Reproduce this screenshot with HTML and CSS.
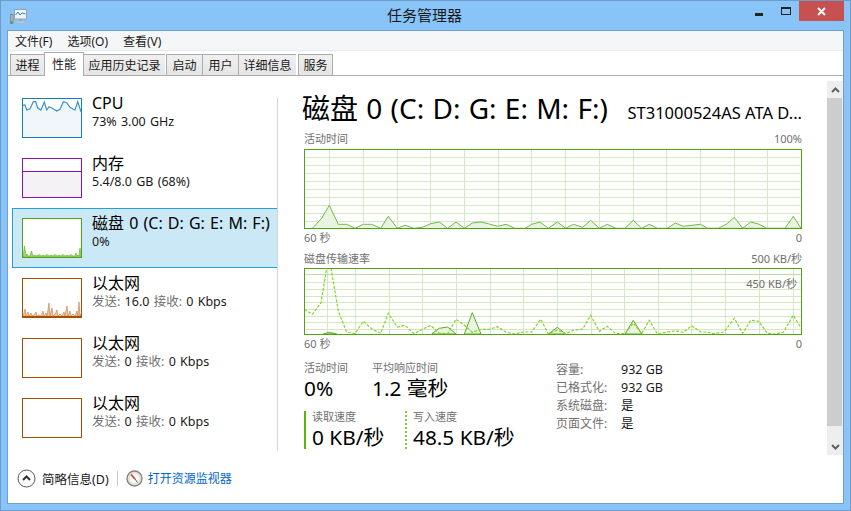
FILE: index.html
```html
<!DOCTYPE html>
<html lang="zh-CN">
<head>
<meta charset="utf-8">
<title>任务管理器</title>
<link rel="stylesheet" href="styles.css">
</head>
<body>
<div class="window">
  <header class="titlebar">
    <svg class="app-icon" width="18" height="16" viewBox="0 0 18 16">
      <rect x="0.5" y="5.5" width="2.5" height="9" fill="#b4bab4" stroke="#6f7d6f" stroke-width="0.7"/>
      <rect x="1" y="12" width="1.5" height="2" fill="#3fa82c"/>
      <rect x="4.5" y="0.5" width="12" height="9.5" fill="#eef3f7" stroke="#97a3ad"/>
      <polyline points="5.5,6 8,3 10,6 12,4 15.5,5" fill="none" stroke="#2f86cc"/>
      <rect x="9" y="10" width="3" height="2" fill="#9fa8af"/>
      <rect x="7" y="12" width="7" height="2" fill="#bcc3c9"/>
    </svg>
    <div class="title">任务管理器</div>
    <div class="controls">
      <span class="ctl-min"></span>
      <span class="ctl-max"></span>
      <span class="ctl-close">
        <svg width="9" height="9" viewBox="0 0 9 9"><path d="M1 1 8 8M8 1 1 8" stroke="#fff" stroke-width="2" fill="none"/></svg>
      </span>
    </div>
  </header>

  <div class="client">
    <nav class="menu">
      <span class="menu-item">文件(F)</span>
      <span class="menu-item">选项(O)</span>
      <span class="menu-item">查看(V)</span>
    </nav>
    <div class="tabs">
      <span class="tab">进程</span>
      <span class="tab tab-on">性能</span>
      <span class="tab">应用历史记录</span>
      <span class="tab tab-wide tab-gap">启动</span>
      <span class="tab tab-wide">用户</span>
      <span class="tab">详细信息</span>
      <span class="tab tab-gap">服务</span>
    </div>

    <main class="main">
      <div class="list">
        <div class="item">
          <svg class="thumb" width="60" height="40" viewBox="0 0 60 40">
            <rect x="0.5" y="0.5" width="59" height="39" fill="#f1f6fa"/>
            <polygon points="0.3,7.3 3,7 4.7,12 8,10.7 11.3,3.7 13.7,3.7 15.7,10 19,12 22.3,4 24.7,12 27,8.7 30.3,10.3 34.7,13 38,11.3 41.3,3.7 44.7,4.7 48,9.3 51.3,11.3 53,12 55.7,3.7 59,13.7 59,0.5 0.3,0.5" fill="#fff"/>
            <polyline points="0.3,7.3 3,7 4.7,12 8,10.7 11.3,3.7 13.7,3.7 15.7,10 19,12 22.3,4 24.7,12 27,8.7 30.3,10.3 34.7,13 38,11.3 41.3,3.7 44.7,4.7 48,9.3 51.3,11.3 53,12 55.7,3.7 59,13.7" fill="none" stroke="#3d93cc" stroke-width="1.2"/>
            <rect x="0.5" y="0.5" width="59" height="39" fill="none" stroke="#117dbb"/>
          </svg>
          <div class="info"><div class="name">CPU</div><div class="sub">73% 3.00 GHz</div></div>
        </div>
        <div class="item">
          <svg class="thumb" width="60" height="40" viewBox="0 0 60 40">
            <rect x="0.5" y="13.5" width="59" height="26" fill="#f4f2f4"/>
            <path d="M0 13.5H60" stroke="#8b12ae"/>
            <rect x="0.5" y="0.5" width="59" height="39" fill="none" stroke="#8b12ae"/>
          </svg>
          <div class="info"><div class="name">内存</div><div class="sub">5.4/8.0 GB (68%)</div></div>
        </div>
        <div class="item item-on">
          <svg class="thumb" width="60" height="40" viewBox="0 0 60 40">
            <rect x="0.5" y="0.5" width="59" height="39" fill="#fff"/>
            <polygon points="1,39 2.5,28 4,38 5,36 6,38 8,38 9.5,33 11,38 13,37 15,38 17,36.5 19,38 21,37 23,38 25,36.5 27,38 29,37 31,38 33,36.5 35,38 37,37 39,38 41,36.5 43,38 45,37 47,38 49,36.5 51,38 53,38 54,35 55,38 56,37 57,38 58,30 59,39" fill="#a7d585" stroke="#5cb01e" stroke-width="0.6"/>
            <rect x="0.5" y="0.5" width="59" height="39" fill="none" stroke="#4da60c"/>
          </svg>
          <div class="info"><div class="name">磁盘 0 (C: D: G: E: M: F:)</div><div class="sub">0%</div></div>
        </div>
        <div class="item">
          <svg class="thumb" width="60" height="40" viewBox="0 0 60 40">
            <rect x="0.5" y="0.5" width="59" height="39" fill="#fff"/>
            <polygon points="1,39 3,31 4,38 6,34 7,38 9,35 10,38 12,37 14,34 15,38 17,37 19,38 21,33 22,38 24,35 25,38 27,25 28,38 30,30 31,38 33,36 35,32 36,38 38,36 40,38 42,34 43,38 45,28 46,38 48,33 49,38 51,36 53,38 55,33 56,38 57,24 58,38 59,36 59,39" fill="#eec7a4" stroke="#c27a3c" stroke-width="0.6"/>
            <path d="M0 38.5H60" stroke="#a74f01"/>
            <rect x="0.5" y="0.5" width="59" height="39" fill="none" stroke="#a74f01"/>
          </svg>
          <div class="info"><div class="name">以太网</div><div class="sub"><span class="muted">发送:</span> 16.0 <span class="muted">接收:</span> 0 Kbps</div></div>
        </div>
        <div class="item">
          <svg class="thumb" width="60" height="40" viewBox="0 0 60 40">
            <rect x="0.5" y="0.5" width="59" height="39" fill="#fff" stroke="#a74f01"/>
          </svg>
          <div class="info"><div class="name">以太网</div><div class="sub"><span class="muted">发送:</span> 0 <span class="muted">接收:</span> 0 Kbps</div></div>
        </div>
        <div class="item">
          <svg class="thumb" width="60" height="40" viewBox="0 0 60 40">
            <rect x="0.5" y="0.5" width="59" height="39" fill="#fff" stroke="#a74f01"/>
          </svg>
          <div class="info"><div class="name">以太网</div><div class="sub"><span class="muted">发送:</span> 0 <span class="muted">接收:</span> 0 Kbps</div></div>
        </div>
      </div>
      <div class="rule"></div>

      <section class="detail">
        <div class="head">
          <h1 class="heading">磁盘 0 (C: D: G: E: M: F:)</h1>
          <div class="model">ST31000524AS ATA D...</div>
        </div>

        <div class="caps caps-first"><span>活动时间</span><span>100%</span></div>
        <svg class="chart" width="498" height="80" viewBox="0 0 498 80">
          <path class="grid" d="M0 8.5H498M0 16.5H498M0 24.5H498M0 32.5H498M0 40.5H498M0 48.5H498M0 56.5H498M0 64.5H498M0 72.5H498M25.5 0V80M59.5 0V80M93.5 0V80M126.5 0V80M160.5 0V80M194.5 0V80M227.5 0V80M261.5 0V80M295.5 0V80M329.5 0V80M362.5 0V80M396.5 0V80M430.5 0V80M463.5 0V80"/>
          <polygon class="area" points="8,79.7 17.7,69.3 25.3,56.3 34.3,75.3 42.7,75.3 51,79.3 59.3,75.3 67.7,75.3 76.7,79.3 84.3,67.3 93.3,79.3 101,76.3 110,79.3 118.3,78.3 126.7,74.7 135.3,73 143.7,79.3 152,73 160.3,79.3 168.3,74 177,73 185.3,75 193.7,77.3 202,75.3 211,79.3 221,79.3 227.7,75.3 236,73 244.3,79.3 253.3,73 261.7,79.3 269.3,75.3 278.7,78.3 286.7,71.3 295.3,79.3 303.3,75.3 311.7,79.3 321,79.3 329.3,71.3 337.7,79.3 345.3,75.3 353.3,79.3 363.3,79.3 371.3,74 379.3,77.3 396.7,75.3 403.3,79.3 414.3,79.3 422.7,75 430.3,68.3 438.7,79.3 446.7,73 454.7,75 462.7,79.3 481,79.3 489.3,67.3 497,79.3"/>
          <rect class="frame" x="0.5" y="0.5" width="497" height="79"/>
        </svg>
        <div class="caps caps-under"><span>60 秒</span><span>0</span></div>

        <div class="caps caps-second"><span>磁盘传输速率</span><span>500 KB/秒</span></div>
        <div class="chart-wrap">
          <svg class="chart" width="498" height="67" viewBox="0 0 498 67">
            <path class="grid" d="M0 14.5H498M0 21.5H498M0 28.5H498M0 34.5H498M0 41.5H498M0 48.5H498M0 54.5H498M0 61.5H498M23.5 0V67M51.5 0V67M85.5 0V67M118.5 0V67M152.5 0V67M186.5 0V67M219.5 0V67M253.5 0V67M287.5 0V67M320.5 0V67M354.5 0V67M387.5 0V67M421.5 0V67M455.5 0V67M489.5 0V67"/>
            <path class="limit" d="M0 6.5H498"/>
            <polygon class="area-strong" points="19.3,66 25.3,64.3 32.7,66"/>
            <polygon class="area-strong" points="127.7,66 135.3,60.3 143.7,59 152,66"/>
            <polygon class="area-strong" points="160.3,66 168.3,44.7 177,66"/>
            <polygon class="area-strong" points="244.3,66 253.3,59.3 261.7,66"/>
            <polygon class="area-strong" points="321,66 329.3,52.3 337.7,66"/>
            <polyline class="dash" points="0.3,41.3 8.3,46.3 17,34.7 22.7,0.3 27,0.3 34.3,43 42.7,64.3 51,65.7 59.3,53.3 68.3,61.3 76.7,65.3 84.3,45.3 93.3,59 101,57.3 110,65.7 118.3,61.3 126.7,57.3 135.3,65.3 143.7,65.7 152,51.3 160.3,57.3 168.3,64.3 177,61.3 185.3,61.3 193.7,58.7 202,64.3 211,66 219.3,64 227.7,64 236.7,51.3 244.3,65.7 253.3,62 261.7,65.7 269.3,62.3 278.7,61 286.7,47.3 295.3,63.3 303.3,58.3 311.7,65.7 321,65.7 329.3,55 337.7,65.7 345.3,52.3 353.3,65.7 371.3,62.7 379.3,64.3 387.7,57.7 396.7,64 403.3,64 409.3,65.7 420,64 430.3,50.3 438.7,65.3 446.7,52.3 454.7,53.3 463.3,65.3 471,66 479.3,64.3 489.3,47.3 497,59.7"/>
            <rect class="frame" x="0.5" y="0.5" width="497" height="66"/>
          </svg>
          <span class="limit-label">450 KB/秒</span>
        </div>
        <div class="caps caps-under"><span>60 秒</span><span>0</span></div>

        <div class="bottom">
          <div class="stats">
            <div class="stat-row stat-row-top">
              <div class="stat stat-active"><div class="stat-label">活动时间</div><div class="stat-value">0%</div></div>
              <div class="stat"><div class="stat-label">平均响应时间</div><div class="stat-value">1.2 毫秒</div></div>
            </div>
            <div class="stat-row">
              <div class="stat stat-read"><div class="stat-label">读取速度</div><div class="stat-value">0 KB/秒</div></div>
              <div class="stat stat-write"><div class="stat-label">写入速度</div><div class="stat-value">48.5 KB/秒</div></div>
            </div>
          </div>
          <dl class="props">
            <dt>容量:</dt><dd>932 GB</dd>
            <dt>已格式化:</dt><dd>932 GB</dd>
            <dt>系统磁盘:</dt><dd>是</dd>
            <dt>页面文件:</dt><dd>是</dd>
          </dl>
        </div>
      </section>

      <div class="scroll">
        <div class="scroll-btn">
          <svg width="9" height="6" viewBox="0 0 9 6"><path d="M1 5 4.5 1.5 8 5" fill="none" stroke="#606060" stroke-width="2"/></svg>
        </div>
        <div class="scroll-thumb"></div>
        <div class="scroll-track"></div>
        <div class="scroll-btn">
          <svg width="9" height="6" viewBox="0 0 9 6"><path d="M1 1 4.5 4.5 8 1" fill="none" stroke="#606060" stroke-width="2"/></svg>
        </div>
      </div>
    </main>

    <footer class="footer">
      <svg width="19" height="19" viewBox="0 0 19 19"><circle cx="9.5" cy="9.5" r="8.5" fill="#fff" stroke="#555"/><path d="M6 11 9.5 7.5 13 11" fill="none" stroke="#333" stroke-width="2"/></svg>
      <span class="fewer">简略信息(D)</span>
      <span class="foot-sep"></span>
      <svg width="17" height="17" viewBox="0 0 17 17"><circle cx="8.5" cy="8.5" r="7.5" fill="#ece8dc" stroke="#85857c" stroke-width="1.4"/><circle cx="8.5" cy="8.5" r="5.4" fill="#fbfaf6" stroke="#cfcbc0" stroke-width="0.6"/><path d="M5 4.5 9 9" stroke="#c83a32" stroke-width="1.6"/><path d="M9 9 11.5 12.5" stroke="#555" stroke-width="1"/></svg>
      <span class="link">打开资源监视器</span>
    </footer>
  </div>
</div>
</body>
</html>
```
FILE: styles.css
```css
* { box-sizing: border-box; }
html, body { margin: 0; padding: 0; }
body { font-family: "Noto Sans", "Noto Sans CJK SC", sans-serif; color: #000; }

.window {
  width: 851px; height: 511px;
  background: #89c4f9;
  border: 1px solid #6d9ccb;
  display: flex; flex-direction: column;
}
.titlebar { height: 29px; flex: none; display: flex; position: relative; }
.app-icon { margin: 8px 0 0 9px; }
.title {
  position: absolute; left: 0; right: 2px; top: 5px;
  text-align: center; font-size: 15px; line-height: 18px; color: #1a1a1a;
}
.controls { margin-left: auto; display: flex; align-items: flex-start; margin-right: 6px; }
.ctl-min { width: 8px; height: 3px; background: #222; margin: 12px 18px 0 0; }
.ctl-max { width: 10px; height: 8px; border: 1px solid #222; border-top-width: 2px; margin: 6px 8px 0 0; }
.ctl-close {
  width: 45px; height: 20px; background: #c75050;
  display: flex; align-items: center; justify-content: center;
}

.client {
  flex: 1; margin: 0 6px 6px;
  background: #fff;
  border: 1px solid #6f9fcf;
  display: flex; flex-direction: column;
  min-height: 0;
}
.menu {
  height: 20px; flex: none;
  background: #f5f6f7;
  border-bottom: 1px solid #e8e9ea;
  display: flex; align-items: center;
  padding-left: 7px; gap: 15px;
  font-size: 12px; color: #1a1a1a;
}
.tabs {
  height: 25px; flex: none;
  display: flex; align-items: flex-end;
  padding-left: 2px;
  border-bottom: 1px solid #acacac;
  font-size: 12px;
}
.tab {
  height: 21px; padding: 0 4.5px;
  border: 1px solid #acacac; border-bottom: 0; border-right-width: 0;
  background: linear-gradient(#f0f0f0, #e5e5e5);
  display: flex; align-items: center; justify-content: center;
  color: #1a1a1a;
}
.tab:last-child { border-right-width: 1px; margin-left: 2px; }
.tab-wide { padding: 0 5.5px; }
.tab-gap { margin-left: 1px; }
.tab-on {
  height: 24px; background: #fff; margin-bottom: -1px; padding: 0 7px 2px;
  border-right-width: 1px; position: relative;
}
.tab-on + .tab { border-left-width: 0; }

.main { flex: 1; display: flex; min-height: 0; position: relative; }
.list { width: 265px; margin: 12px 0 0 4px; flex: none; }
.item {
  height: 60px; display: flex; padding-left: 9px;
  border: 1px solid transparent; border-right: 0;
}
.item-on { background: #cbe8f6; border-color: #26a0da; }
.thumb { margin-top: 9px; flex: none; }
.info { margin: 4px 0 0 10px; white-space: nowrap; }
.name { font-size: 16px; line-height: 20px; word-spacing: 1px; }
.sub { font-size: 12.5px; line-height: 17px; word-spacing: 1px; color: #1a1a1a; }
.muted { color: #707070; }
.rule { width: 1px; flex: none; background: #d4d4d4; margin: 22px 0 0; height: 353px; }

.detail { width: 498px; flex: none; margin-left: 26px; }
.head { display: flex; justify-content: space-between; align-items: baseline; height: 56px; padding-top: 15px; margin-left: -2px; }
.heading { margin: 0; font-size: 28px; font-weight: 400; line-height: 34px; white-space: nowrap; word-spacing: 1px; }
.model { font-size: 16.5px; white-space: nowrap; }
.caps { display: flex; justify-content: space-between; font-size: 11px; line-height: 16px; color: #707070; }
.caps-first { margin-top: -1px; height: 18px; }
.caps-under { height: 20px; padding-top: 1px; }
.caps-second { height: 19px; padding-top: 2px; }
.chart { display: block; }
.grid { stroke: #d4e8c4; fill: none; shape-rendering: crispEdges; }
.frame { fill: none; stroke: #4da60c; shape-rendering: crispEdges; }
.area { fill: #e9f4e0; stroke: #72b84a; }
.area-strong { fill: #e9f4e0; stroke: #5aa82a; }
.dash { fill: none; stroke: #86d42a; stroke-width: 1.2; stroke-dasharray: 3 1.5; }
.limit { stroke: #bcdca0; stroke-width: 1; shape-rendering: crispEdges; }
.chart-wrap { position: relative; }
.limit-label { position: absolute; right: 5px; top: 8px; font-size: 11px; line-height: 16px; color: #707070; }

.bottom { display: flex; margin-top: 6px; }
.stats { width: 252px; flex: none; }
.stat-row { display: flex; }
.stat-row-top { height: 50px; }
.stat-active { width: 68px; }
.stat-label { font-size: 11px; line-height: 14px; color: #707070; }
.stat-value { font-size: 20.8px; line-height: 26px; white-space: nowrap; }
.stat-read { width: 101px; border-left: 2px solid #5ab708; padding-left: 6px; height: 38px; }
.stat-write { border-left: 2px dotted #7fd02c; padding-left: 6px; height: 38px; }
.stat-read .stat-label, .stat-write .stat-label { line-height: 12px; }
.stat-read .stat-value, .stat-write .stat-value { line-height: 28px; }
.props {
  margin: 0; display: grid; grid-template-columns: 65px auto; align-content: start;
  font-size: 12px; line-height: 18px;
}
.props dt { color: #707070; }
.props dd { margin: 0; color: #1a1a1a; font-size: 12.5px; }

.scroll { position: absolute; right: 0; top: 5px; width: 16px; height: 374px; display: flex; flex-direction: column; background: #eee; }
.scroll-btn { height: 17px; flex: none; display: flex; align-items: center; justify-content: center; }
.scroll-thumb { height: 328px; flex: none; background: #cdcdcd; margin-right: 1px; }
.scroll-track { flex: 1; }

.footer {
  height: 48px; flex: none;
  display: flex; align-items: center;
  padding: 0 0 2px 9px;
  font-size: 12px;
}
.fewer { margin-left: 6px; color: #1a1a1a; font-size: 12.5px; }
.foot-sep { width: 1px; height: 15px; background: #c8c8c8; margin: 0 8px; }
.link { color: #0066cc; margin-left: 5px; }
```
